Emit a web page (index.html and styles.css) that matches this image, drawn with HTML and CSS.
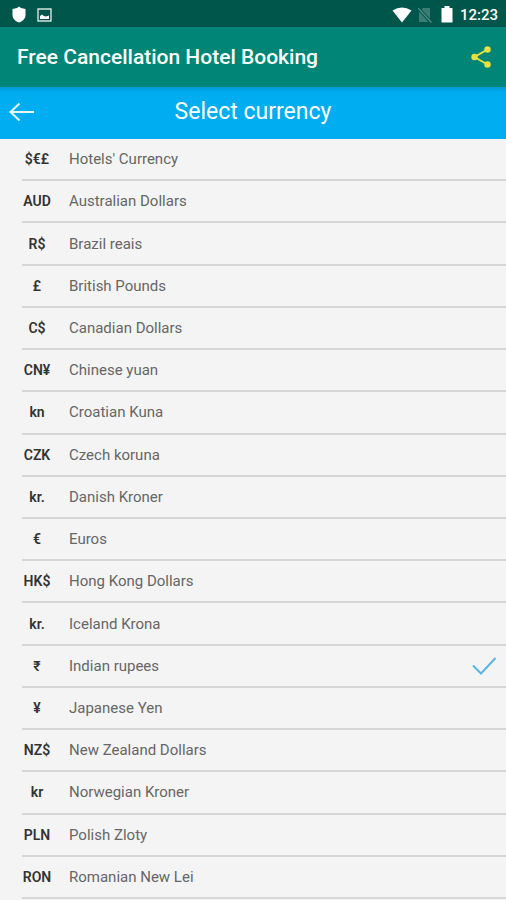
FILE: index.html
```html
<!DOCTYPE html>
<html lang="en">
<head>
<meta charset="utf-8">
<meta name="viewport" content="width=device-width, initial-scale=1">
<title>Free Cancellation Hotel Booking</title>
<link rel="stylesheet" href="styles.css">
</head>
<body>
<div class="status">
  <svg width="14" height="17" viewBox="0 0 14 17" aria-hidden="true"><path fill="#fff" d="M7 0.500 9 2l4.500 1v6c0 3.500-2.500 6-6.500 7.500C3 15 .5 12.500 .5 9V3L5 2z"/></svg>
  <svg width="15" height="14" viewBox="0 0 15 14" aria-hidden="true"><path fill="none" stroke="#d3e3e0" stroke-width="1.400" d="M1 1h13v12H1z"/><path fill="#fff" d="M3 11V8l2-1.500L7 8l2 .5 3-1V11z"/></svg>
  <span class="spacer"></span>
  <svg width="20" height="16" viewBox="0 0 20 16" aria-hidden="true"><path fill="#fff" d="M.5 3.500Q10-2.500 19.500 3.500L10 15.500z"/></svg>
  <svg class="sim" width="14" height="16" viewBox="0 0 14 16" aria-hidden="true"><path fill="#3d7c72" d="M5 1h7v10.500L3.500 2.500zM1 4.500 10.500 15H1z"/><path stroke="#4f8d84" stroke-width="1.300" d="M0 1l13.500 14.500"/></svg>
  <svg class="battery" width="12" height="17" viewBox="0 0 12 17" aria-hidden="true"><path fill="#fff" d="M3.500 0h5v2H11q.5 0 .5.500V16q0 .5-.5.500H1q-.5 0-.5-.5V2.500Q.5 2 1 2h2.500z"/></svg>
  <time>12:23</time>
</div>
<header class="appbar">
  <h1>Free Cancellation Hotel Booking</h1>
  <button type="button" aria-label="Share">
    <svg width="20" height="22" viewBox="0 0 20 22"><path fill="none" stroke="#eae23c" stroke-width="2" d="M16.500 3.500 3.500 11l13 7.500"/><g fill="#eae23c"><circle cx="16.500" cy="3.500" r="3.200"/><circle cx="3.500" cy="11" r="3.200"/><circle cx="16.500" cy="18.500" r="3.200"/></g></svg>
  </button>
</header>
<div class="subbar">
  <button type="button" aria-label="Back">
    <svg width="26" height="20" viewBox="0 0 26 20"><path fill="none" stroke="#e4f7ff" stroke-width="2" d="M25 10H1.500M10.500 1.500 1.500 10l9 8.500"/></svg>
  </button>
  <h2>Select currency</h2>
</div>
<main class="list">
  <label class="row"><b>$€£</b><span>Hotels' Currency</span><input type="radio" name="currency"></label>
  <label class="row"><b>AUD</b><span>Australian Dollars</span><input type="radio" name="currency"></label>
  <label class="row"><b>R$</b><span>Brazil reais</span><input type="radio" name="currency"></label>
  <label class="row"><b>£</b><span>British Pounds</span><input type="radio" name="currency"></label>
  <label class="row"><b>C$</b><span>Canadian Dollars</span><input type="radio" name="currency"></label>
  <label class="row"><b>CN¥</b><span>Chinese yuan</span><input type="radio" name="currency"></label>
  <label class="row"><b>kn</b><span>Croatian Kuna</span><input type="radio" name="currency"></label>
  <label class="row"><b>CZK</b><span>Czech koruna</span><input type="radio" name="currency"></label>
  <label class="row"><b>kr.</b><span>Danish Kroner</span><input type="radio" name="currency"></label>
  <label class="row"><b>€</b><span>Euros</span><input type="radio" name="currency"></label>
  <label class="row"><b>HK$</b><span>Hong Kong Dollars</span><input type="radio" name="currency"></label>
  <label class="row"><b>kr.</b><span>Iceland Krona</span><input type="radio" name="currency"></label>
  <label class="row"><b>₹</b><span>Indian rupees</span><input type="radio" name="currency" checked><svg width="24" height="18" viewBox="0 0 24 18" aria-hidden="true"><path fill="none" stroke="#5bb5e3" stroke-width="2" d="M1 8.500 9 16.500 23.500 1"/></svg></label>
  <label class="row"><b>¥</b><span>Japanese Yen</span><input type="radio" name="currency"></label>
  <label class="row"><b>NZ$</b><span>New Zealand Dollars</span><input type="radio" name="currency"></label>
  <label class="row"><b>kr</b><span>Norwegian Kroner</span><input type="radio" name="currency"></label>
  <label class="row"><b>PLN</b><span>Polish Zloty</span><input type="radio" name="currency"></label>
  <label class="row"><b>RON</b><span>Romanian New Lei</span><input type="radio" name="currency"></label>
</main>
</body>
</html>
```
FILE: styles.css
```css
* { box-sizing: border-box; }

body {
  margin: 0;
  min-height: 100vh;
  padding-bottom: 1px;
  display: flex;
  flex-direction: column;
  background: #f4f4f4;
  font-family: Roboto, "Liberation Sans", sans-serif;
}

h1, h2 { margin: 0; color: #fff; }

button {
  display: flex;
  padding: 0;
  border: 0;
  background: none;
  cursor: pointer;
}

.status {
  display: flex;
  align-items: center;
  height: 27px;
  padding: 2px 8px 0 12px;
  gap: 11px;
  background: #00564b;
}

.spacer { flex: 1; }

.sim { margin-left: -5px; }

.battery { margin: 0 -4px 0 -2px; }

.status time {
  color: #fff;
  font-size: 15px;
  font-weight: 500;
  line-height: 24px;
}

.appbar {
  display: flex;
  align-items: center;
  justify-content: space-between;
  height: 60px;
  padding: 0 15px 0 17px;
  background: #008577;
}

.appbar h1 {
  font-size: 21px;
  font-weight: 500;
  line-height: 28px;
}

.subbar {
  display: grid;
  grid-template-columns: 26px 1fr 26px;
  align-items: center;
  height: 52px;
  padding: 0 9px 2px;
  background: linear-gradient(#0299d3, #00adf0 5px);
}

.subbar h2 {
  font-size: 23px;
  font-weight: 400;
  line-height: 28px;
  text-align: center;
}

.list {
  flex: 1;
  display: grid;
  grid-auto-rows: minmax(42px, 1fr);
  padding-left: 22px;
}

.row {
  display: grid;
  grid-template-columns: 30px 1fr auto auto;
  align-items: center;
  padding-right: 10px;
  border-bottom: 2px solid #d6d6d6;
  font-size: 15px;
  line-height: 20px;
  cursor: pointer;
}

.row b {
  color: #333;
  font-size: 14px;
  font-weight: 600;
  text-align: center;
}

.row span {
  padding-left: 17px;
  color: #666;
}

.row input {
  appearance: none;
  width: 0;
  height: 0;
  margin: 0;
}
```
